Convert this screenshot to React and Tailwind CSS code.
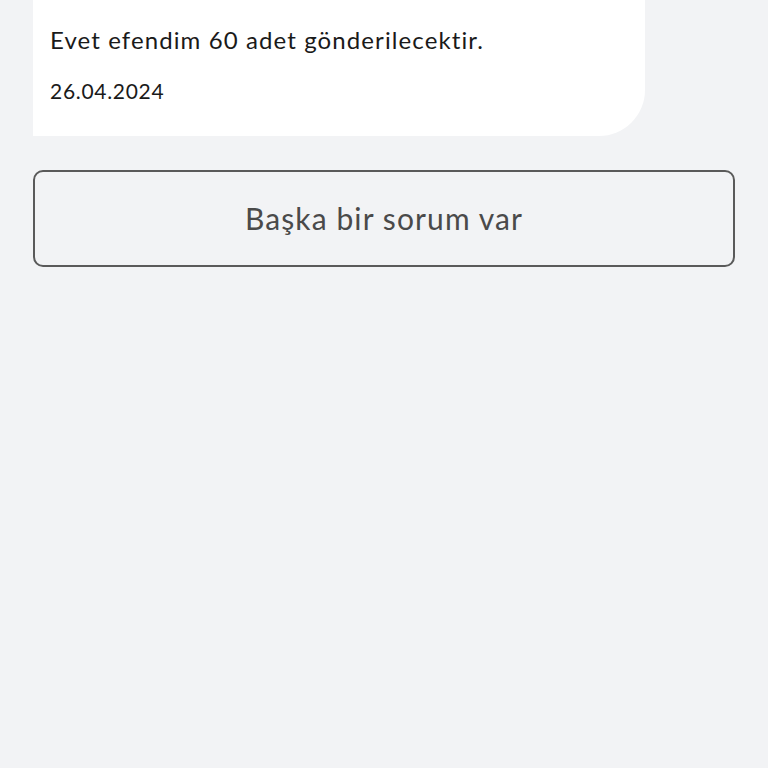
export default function App() {
  return (
    <div className="h-screen overflow-hidden bg-[#f2f3f5] px-[33px] font-['Lato',sans-serif]">
      {/* Message bubble */}
      <div className="w-[612px] -mt-[40px] bg-white rounded-t-[40px] rounded-br-[46px] px-[17px] pt-[66px] pb-[32px]">
        <p className="text-[24px] leading-[28px] tracking-[1.1px] text-[#1a1a1a]">
          Evet efendim 60 adet gönderilecektir.
        </p>
        <p className="mt-[24px] text-[21px] leading-[26px] tracking-[0.7px] text-[#1a1a1a]">26.04.2024</p>
      </div>

      {/* Another question */}
      <button className="mt-[34px] w-full h-[97px] rounded-[10px] border-2 border-[#5a5a5a] text-[30px] tracking-[1.1px] text-[#4a4a4a]">
        Başka bir sorum var
      </button>
    </div>
  )
}
